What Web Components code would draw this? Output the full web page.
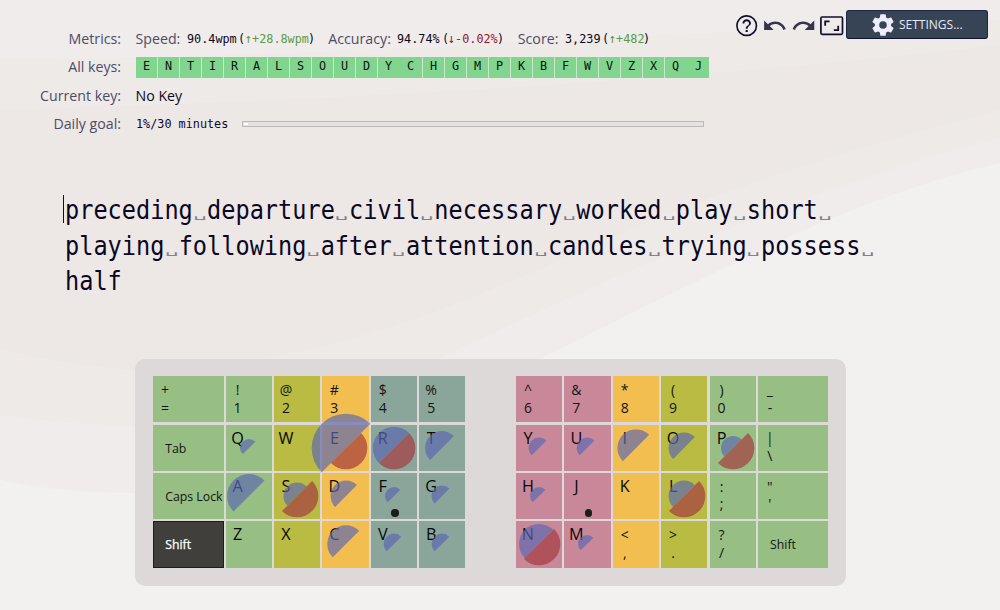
<!DOCTYPE html>
<html lang="en">
<head>
<meta charset="utf-8">
<title>Typing practice</title>
<style>
html,body{margin:0;height:100%;overflow:hidden;background:#f2f1ef}
</style>
</head>
<body>
<typing-app></typing-app>
<script>
const define = (name, html, setup) => customElements.define(name, class extends HTMLElement {
  connectedCallback() {
    if (this.shadowRoot) return;
    const root = this.attachShadow({ mode: 'open' });
    const t = document.createElement('template');
    t.innerHTML = typeof html === 'function' ? html(this) : html;
    root.append(t.content.cloneNode(true));
    if (setup) setup(this, root);
  }
});
const esc = s => s.replace(/&/g, '&amp;').replace(/</g, '&lt;').replace(/"/g, '&quot;');

/* Narrow monospace run: each character advances 7.1 pixels. */
define('mono-text', '<style>:host{display:inline-block;white-space:pre;font-family:"DejaVu Sans Mono",monospace;font-size:13px;line-height:18px}span{display:inline-block;transform:scaleX(.9073);transform-origin:0 50%}</style><span><slot></slot></span>',
  el => { el.style.width = (el.textContent.length * 7.1) + 'px'; });

const ICONS = {
  help: 'M11,18H13V16H11V18M12,2A10,10 0 0,0 2,12A10,10 0 0,0 12,22A10,10 0 0,0 22,12A10,10 0 0,0 12,2M12,20.4C7.37,20.4 3.6,16.63 3.6,12C3.6,7.37 7.37,3.6 12,3.6C16.63,3.6 20.4,7.37 20.4,12C20.4,16.63 16.63,20.4 12,20.4M12,6A4,4 0 0,0 8,10H9.7A2.3,2.3 0 0,1 12,7.7A2.3,2.3 0 0,1 14.3,10C14.3,12 11.1,11.75 11.1,15H12.9C12.9,12.25 16,12 16,10A4,4 0 0,0 12,6Z',
  undo: 'M12.5,8C9.85,8 7.45,9 5.6,10.6L2,7V16H11L7.38,12.38C8.77,11.22 10.54,10.5 12.5,10.5C16.04,10.5 19.05,12.81 20.1,16L22.47,15.22C21.08,11.03 17.15,8 12.5,8Z',
  redo: 'M18.4,10.6C16.55,9 14.15,8 11.5,8C6.85,8 2.92,11.03 1.54,15.22L3.9,16C4.95,12.81 7.95,10.5 11.5,10.5C13.45,10.5 15.23,11.22 16.62,12.38L13,16H22V7L18.4,10.6Z',
  frame: 'M19,12H17.3V15.3H14V17H19V12M6.7,8.7H10V7H5V12H6.7V8.7M21,3H3A2,2 0 0,0 1,5V19A2,2 0 0,0 3,21H21A2,2 0 0,0 23,19V5A2,2 0 0,0 21,3M21.4,19.4H2.6V4.6H21.4V19.4Z',
  cog: 'M12,15.5A3.5,3.5 0 0,1 8.5,12A3.5,3.5 0 0,1 12,8.5A3.5,3.5 0 0,1 15.5,12A3.5,3.5 0 0,1 12,15.5M19.43,12.97C19.47,12.65 19.5,12.33 19.5,12C19.5,11.67 19.47,11.34 19.43,11L21.54,9.37C21.73,9.22 21.78,8.95 21.66,8.73L19.66,5.27C19.54,5.05 19.27,4.96 19.05,5.05L16.56,6.05C16.04,5.66 15.5,5.32 14.87,5.07L14.5,2.42C14.46,2.18 14.25,2 14,2H10C9.75,2 9.54,2.18 9.5,2.42L9.13,5.07C8.5,5.32 7.96,5.66 7.44,6.05L4.95,5.05C4.73,4.96 4.46,5.05 4.34,5.27L2.34,8.73C2.21,8.95 2.27,9.22 2.46,9.37L4.57,11C4.53,11.34 4.5,11.67 4.5,12C4.5,12.33 4.53,12.65 4.57,12.97L2.46,14.63C2.27,14.78 2.21,15.05 2.34,15.27L4.34,18.73C4.46,18.95 4.73,19.03 4.95,18.95L7.44,17.94C7.96,18.34 8.5,18.68 9.13,18.93L9.5,21.58C9.54,21.82 9.75,22 10,22H14C14.25,22 14.46,21.82 14.5,21.58L14.87,18.93C15.5,18.67 16.04,18.34 16.56,17.94L19.05,18.95C19.27,19.03 19.54,18.95 19.66,18.73L21.66,15.27C21.78,15.05 21.73,14.78 21.54,14.63L19.43,12.97Z'
};
define('app-icon', el => `<style>:host{display:block;width:25.4px;height:25.4px;color:#100d2c}svg{display:block;width:100%;height:100%}</style><svg viewBox="0 0 24 24"><path fill="currentColor" d="${ICONS[el.getAttribute('name')]}"/></svg>`);

define('tool-bar', `<style>
:host{display:flex;align-items:flex-start;justify-content:flex-end;padding:10px 12.3px 0 0}
.icons{display:flex;gap:2.9px;margin:3px 1.8px 0 0}
.icons .soft{color:#38344e}
button{all:unset;box-sizing:border-box;display:flex;align-items:center;width:141.7px;height:28.5px;padding-left:24px;gap:2px;background:#364455;border:1px solid #1d2545;border-bottom-color:#10112d;border-radius:3px;color:#e9e8fb;font:12px/27.5px "Open Sans",sans-serif;letter-spacing:0}
button app-icon{width:26px;height:26px;color:#f0ecff;position:relative;top:1px;left:-1px}
</style><div class="icons"><app-icon name="help"></app-icon><app-icon class="soft" name="undo"></app-icon><app-icon class="soft" name="redo"></app-icon><app-icon name="frame"></app-icon></div><button><app-icon name="cog"></app-icon><span>SETTINGS...</span></button>`);

define('info-row', `<style>:host{display:flex;height:28.4px;align-items:center;font:14.2px/28.4px "Open Sans",sans-serif}
.label{width:121px;margin-right:14.5px;text-align:right;color:#4e4b66}.value{display:flex;align-items:center;color:#0c0a24}</style>
<span class="label"><slot name="label"></slot></span><span class="value"><slot></slot></span>`);

define('metric-item', el => `<style>:host{display:flex;align-items:center;width:var(--w)}
.n{color:#4e4b66;width:var(--lw)}mono-text{color:#0a0818}.v{margin-right:2.3px}.up{color:#5a9a48;margin:0 -1px 0 -.8px}.down{color:#932025;margin:0 -1px 0 -.8px}</style>
<span class="n">${el.getAttribute('name')}</span><mono-text class="v">${el.getAttribute('value')}</mono-text><mono-text>(</mono-text><mono-text class="${el.getAttribute('trend')}">${el.getAttribute('delta')}</mono-text><mono-text>)</mono-text>`);

define('key-strip', `<style>:host{display:grid;grid-template-columns:repeat(26,21.2px);gap:.9px;background:#cbe8cd;height:21px;margin-top:-1px;width:573.7px}
span{background:#82d58f;display:flex;align-items:center;justify-content:center}mono-text{color:#08120e;position:relative;top:-1px;left:0}</style>
${[...'ENTIRALSOUDYCHGMPKBFWVZXQJ'].map(c => `<span><mono-text>${c}</mono-text></span>`).join('')}`);

define('goal-bar', `<style>:host{display:block;box-sizing:border-box;width:462px;height:6px;margin-left:14px;border:1px solid #bdb9b8;background:#e6e2e1;padding:1px}i{display:block;width:4px;height:2px;background:#fff}</style><i></i>`);

define('text-lines', `<style>:host{display:block;padding-left:64.8px;font:26px/35.5px "DejaVu Sans Mono",monospace;color:#090723;position:relative}
div{width:max-content;white-space:pre;transform:scaleX(.9073);transform-origin:0 0;height:35.5px}
span{display:inline-block;height:35.5px;vertical-align:top;color:#85808f;transform:translateY(-3.5px) scale(.97,.46);transform-origin:50% 28px}i{position:absolute;left:63px;top:1.5px;width:1px;height:28px;background:#111}</style><i></i>
${['preceding departure civil necessary worked play short ', 'playing following after attention candles trying possess ', 'half'].map(l => `<div>${l.replace(/ /g, '<span>␣</span>')}</div>`).join('')}`);

/* One key: upper/lower legend, a letter, or a wide label, with hit (blue) and miss (red) half-discs. */
define('key-cap', el => {
  const a = n => el.getAttribute(n), hit = +a('hit') || 0, miss = +a('miss') || 0;
  const half = (r, sweep, fill) => { const d = r * Math.SQRT1_2; return r ? `<path fill="${fill}" d="M${-d} ${d}A${r} ${r} 0 0 ${sweep} ${d} ${-d}Z"/>` : ''; };
  const body = a('wide') ? `<span class="wide">${a('wide')}</span>`
    : a('letter') ? `<span class="letter">${a('letter')}</span>`
    : `<span class="sym">${esc(a('up'))}</span><span class="sym">${esc(a('down'))}</span>`;
  return `<style>:host{display:flex;flex-direction:column;align-items:flex-start;box-sizing:border-box;position:relative;background:var(--c);color:#141414;font-family:"Open Sans",sans-serif;--c:#97bf83}
:host([z=y]){--c:#b9bb43}:host([z=o]){--c:#f1be4f}:host([z=t]){--c:#8aa69a}:host([z=p]){--c:#c88899}:host([z=k]){--c:#413f3c;color:#fff;box-shadow:inset 0 0 0 1px #1d1c1a}
.sym,.letter{width:24px;text-align:center;display:block;white-space:pre}
.sym{font-size:14px;line-height:17.8px;height:17.8px}.sym:first-of-type{margin-top:4.6px}
.letter{font-size:16.2px;line-height:22px;margin-top:2px;color:#080808}
.wide{font-size:12.3px;line-height:47.6px;height:46.3px;padding-left:12.2px;white-space:nowrap}
:host([z=k]) .wide{-webkit-text-stroke:.25px #fff}
svg{position:absolute;left:50%;top:50%;width:1px;height:1px;overflow:visible}
b{position:absolute;left:20.4px;top:36.4px;width:7.4px;height:7.4px;border-radius:50%;background:#1c1c1a}</style>
${body}${a('dot') !== null ? '<b></b>' : ''}${hit || miss ? `<svg>${half(hit, 1, 'rgba(93,103,177,.68)')}${half(miss, 0, 'rgba(165,60,64,.7)')}</svg>` : ''}`;
});

const ROWS = [
 [['w','+','='],['','!','1'],['y','@','2'],['o','#','3'],['t','$','4'],['t','%','5'],0,['p','^','6'],['p','&','7'],['o','*','8'],['y','(','9'],['',')','0'],['w','_','-']],
 [['W','Tab'],['','Q',9],['y','W'],['o','E',34.3,21.3],['t','R',21.3,21.3],['t','T',16.9],0,['p','Y',10.4],['p','U',10.4],['o','I',18.6],['y','O',15.4],['','P',12,21.3],['w','|','\\']],
 [['W','Caps Lock'],['','A',21.9],['y','S',13.6,21.3],['o','D',15.4],['t','F',9],['t','G',10.5],0,['p','H',9],['p','J'],['o','K'],['y','L',15.4,21.3],['',':',';'],['w','"',"'"]],
 [['K','Shift'],['','Z'],['y','X'],['o','C',18.7],['t','V',10.4],['t','B',10.4],0,['p','N',20,21.3],['p','M',9],['o','<',','],['y','>','.'],['','?','/'],['W','Shift']]
];
define('key-board', `<style>:host{display:block;box-sizing:border-box;margin-left:135px;width:711px;height:227px;padding:17.4px 18px;border-radius:10px;background:#dcd9d8}
.grid{display:grid;grid-template-columns:70.5px repeat(5,46.3px) 46.3px repeat(5,46.3px) 70.5px;grid-auto-rows:46.3px;gap:2.1px}</style><div class="grid">
${ROWS.flat().map(k => {
  if (!k) return '<i></i>';
  const [z, x, y, m] = k;
  if (z === 'W' || z === 'K') return `<key-cap z="${z === 'K' ? 'k' : ''}" wide="${x}"></key-cap>`;
  if (/[A-Z]/.test(x)) return `<key-cap z="${z}" letter="${x}" hit="${y || 0}" miss="${m || 0}" ${/[FJ]/.test(x) ? 'dot' : ''}></key-cap>`;
  return `<key-cap z="${z}" up="${esc(x)}" down="${esc(y)}"></key-cap>`;
}).join('')}</div>`);

define('page-backdrop', `<style>:host{position:absolute;inset:0;z-index:-1}svg{display:block}</style>
<svg width="1000" height="610" viewBox="0 0 1000 610">
<rect width="1000" height="610" fill="#f2f1ef"/>
<path fill="#f0eceb" d="M0 0H1000V163C880 192 790 235 700 280C640 308 590 335 542 358C400 425 260 494 134 493Q60 493 0 480Z"/>
<path fill="#eeeae8" d="M0 59C350 58 600 34 1000 20V138C850 175 700 235 440 358C330 410 200 430 134 426Q60 424 0 415Z"/>
<path fill="#ede7e6" d="M0 110C350 100 700 80 1000 45V110C850 148 740 185 640 225C480 295 330 370 134 370Q60 365 0 348Z"/>
<path fill="#ede8e4" d="M0 272C300 280 550 180 760 140C580 215 350 310 0 286Z" opacity=".6"/></svg>`);

define('typing-app', `<style>:host{display:flex;flex-direction:column;position:relative;z-index:0;width:1000px;height:610px;overflow:hidden}
tool-bar{height:15px;flex:none}section{height:168.1px;flex:none}text-lines{height:165.7px;flex:none}</style>
<page-backdrop></page-backdrop><tool-bar></tool-bar>
<section>
<info-row><span slot="label">Metrics:</span><metric-item style="--w:192.8px;--lw:51px" name="Speed:" value="90.4wpm" trend="up" delta="↑+28.8wpm"></metric-item><metric-item style="--w:189.5px;--lw:68.5px" name="Accuracy:" value="94.74%" trend="down" delta="↓-0.02%"></metric-item><metric-item style="--lw:46.8px" name="Score:" value="3,239" trend="up" delta="↑+482"></metric-item></info-row>
<info-row><span slot="label">All keys:</span><key-strip></key-strip></info-row>
<info-row><span slot="label">Current key:</span>No Key</info-row>
<info-row><span slot="label">Daily goal:</span><mono-text>1%/30 minutes</mono-text><goal-bar></goal-bar></info-row>
</section>
<text-lines></text-lines>
<key-board></key-board>`);
</script>
</body>
</html>
